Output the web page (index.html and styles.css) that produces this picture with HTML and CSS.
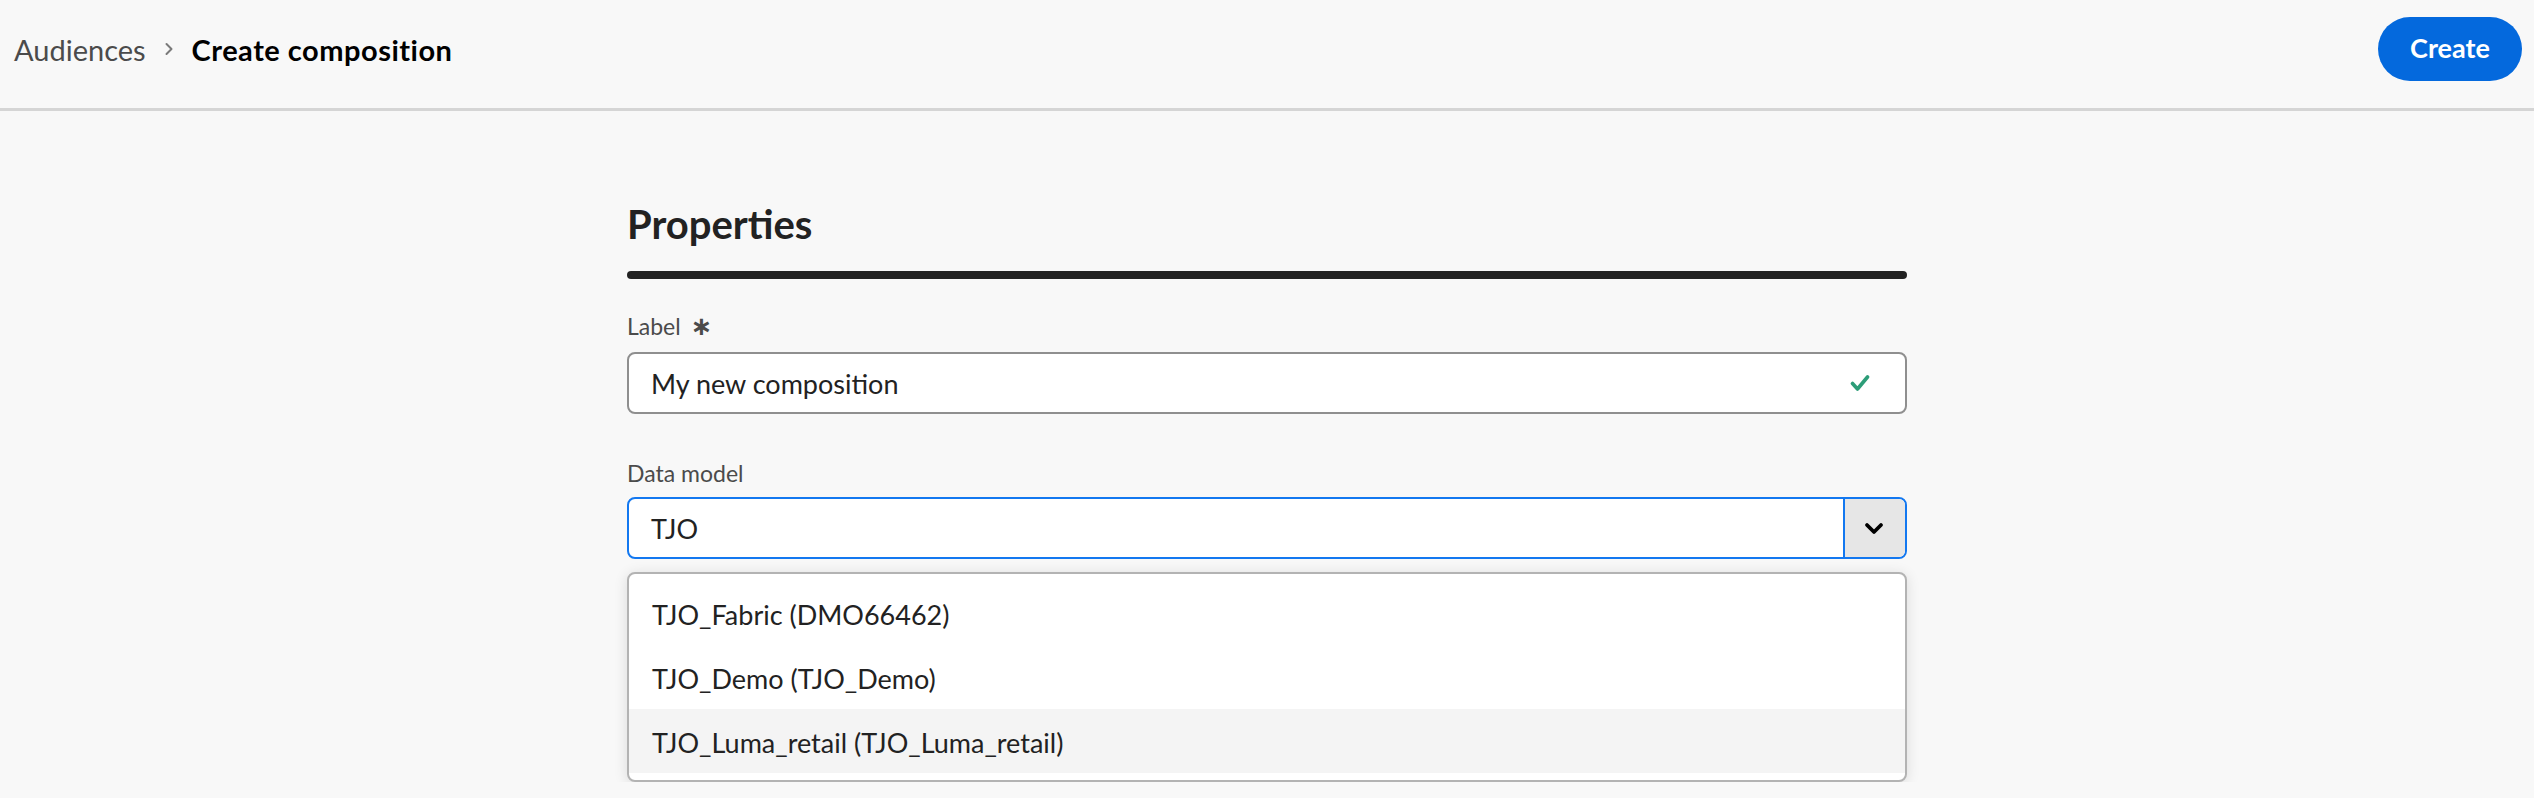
FILE: index.html
```html
<!DOCTYPE html>
<html lang="en">
<head>
<meta charset="utf-8">
<title>Create composition</title>
<link rel="stylesheet" href="styles.css">
</head>
<body>
<header class="topbar">
  <nav class="crumbs">
    <span class="crumb">Audiences</span>
    <svg class="crumb-sep" viewBox="0 0 10 14" width="10" height="14"><path d="M2.5 2 L7.5 7 L2.5 12" fill="none" stroke="#7a7a7a" stroke-width="2" stroke-linecap="round" stroke-linejoin="round"/></svg>
    <span class="crumb current">Create composition</span>
  </nav>
  <button class="btn-primary">Create</button>
</header>
<main class="content">
  <section class="form">
    <h1 class="title">Properties</h1>
    <div class="rule"></div>
    <div class="field">
      <label class="field-label">Label <span class="req">∗</span></label>
      <div class="textfield">
        <span class="value">My new composition</span>
        <svg class="check" viewBox="0 0 20 20" width="20" height="20"><path d="M2.5 10.5 L7.5 16 L17.5 4" fill="none" stroke="#2d9d78" stroke-width="3.6" stroke-linecap="round" stroke-linejoin="round"/></svg>
      </div>
    </div>
    <div class="field field-second">
      <label class="field-label tight">Data model</label>
      <div class="combobox">
        <span class="value">TJO</span>
        <span class="combo-btn"><svg viewBox="0 0 20 13" width="20" height="13"><path d="M3 3 L10 10 L17 3" fill="none" stroke="#000" stroke-width="3.8" stroke-linecap="round" stroke-linejoin="round"/></svg></span>
      </div>
      <ul class="menu">
        <li class="menu-item">TJO_Fabric (DMO66462)</li>
        <li class="menu-item">TJO_Demo (TJO_Demo)</li>
        <li class="menu-item hover">TJO_Luma_retail (TJO_Luma_retail)</li>
      </ul>
    </div>
  </section>
</main>
</body>
</html>
```
FILE: styles.css
```css
* { box-sizing: border-box; }
html, body {
  margin: 0;
  padding: 0;
  background: #f8f8f8;
  font-family: Lato, "Noto Sans", "Liberation Sans", sans-serif;
  color: #222;
}
.topbar {
  height: 111px;
  border-bottom: 3px solid #d5d5d5;
  display: flex;
  align-items: center;
  justify-content: space-between;
  padding: 0 12px 10px 14px;
}
.crumbs {
  display: flex;
  align-items: center;
  gap: 18px;
}
.crumb {
  font-size: 29px;
  color: #4b4b4b;
}
.crumb.current {
  font-weight: 700;
  color: #000;
  letter-spacing: 0.5px;
}
.crumb-sep { display: block; }
.btn-primary {
  height: 64px;
  width: 144px;
  border: none;
  border-radius: 32px;
  background: #0469dd;
  color: #fff;
  font-family: inherit;
  font-weight: 700;
  font-size: 27px;
  padding: 0 0 3px;
}
.content {
  padding-top: 88px;
}
.form {
  width: 1280px;
  margin: 0 auto;
}
.title {
  margin: 0;
  font-size: 40px;
  line-height: 50px;
  font-weight: 700;
  color: #222;
}
.rule {
  margin-top: 22px;
  height: 8px;
  border-radius: 4px;
  background: #222;
}
.field {
  margin-top: 33px;
}
.field-second {
  margin-top: 45px;
}
.field-label {
  display: flex;
  align-items: center;
  gap: 10px;
  font-size: 23px;
  line-height: 28px;
  color: #4b4b4b;
  margin-bottom: 12px;
}
.field-label.tight {
  margin-bottom: 10px;
}
.req {
  font-family: "DejaVu Sans", sans-serif;
  font-size: 26px;
  font-weight: 700;
  color: #4b4b4b;
  line-height: 28px;
}
.textfield, .combobox {
  height: 62px;
  background: #fff;
  border-radius: 8px;
  display: flex;
  align-items: center;
  font-size: 27px;
  color: #222;
}
.textfield {
  border: 2px solid #8f8f8f;
  padding: 0 35px 0 22px;
  justify-content: space-between;
}
.combobox {
  border: 2px solid #1378f0;
  padding-left: 22px;
  overflow: hidden;
}
.combobox .value { flex: 1; }
.combo-btn {
  width: 62px;
  align-self: stretch;
  background: #e6e6e6;
  border-left: 2px solid #1378f0;
  display: flex;
  align-items: center;
  justify-content: center;
  padding-right: 2px;
}
.combo-btn svg { display: block; }
.check { display: block; }
.menu {
  list-style: none;
  margin: 13px 0 0;
  padding: 7px 0;
  background: #fff;
  border: 2px solid #b3b3b3;
  border-radius: 8px;
  box-shadow: 0 2px 14px rgba(0, 0, 0, 0.12);
  overflow: hidden;
}
.menu-item {
  height: 64px;
  display: flex;
  align-items: center;
  padding-left: 23px;
  padding-top: 2px;
  font-size: 27px;
  color: #222;
}
.menu-item.hover {
  background: #f4f4f4;
}
```
